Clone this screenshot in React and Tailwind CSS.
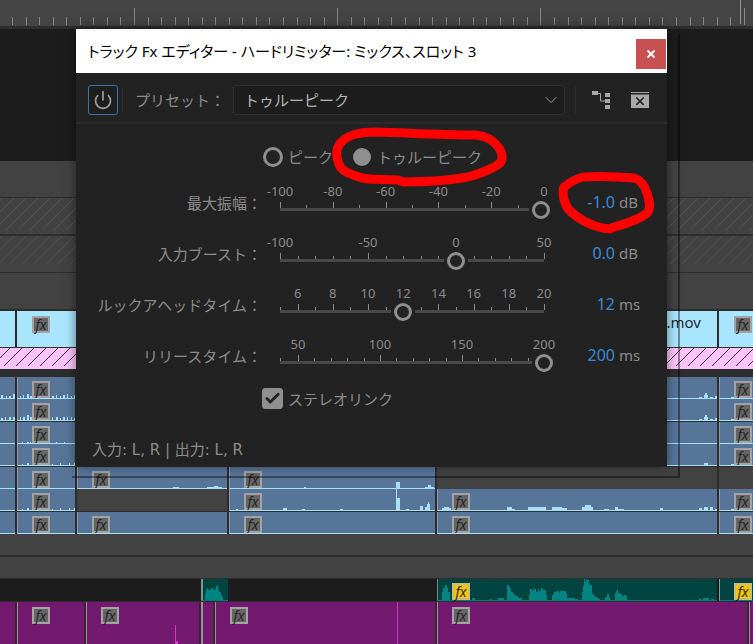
import React, { useState } from 'react'
import { ChevronDown, Power, Check } from 'lucide-react'

const range = (from, to, step) => {
  const out = []
  for (let n = from; n <= to; n += step) out.push(n)
  return out
}

// [x, width, height] of every bar, measured from the left edge of its clip
const waves = {
  edge: [[1, 2, 3], [6, 1, 2], [9, 2, 2], [13, 2, 4]],
  edgeTwo: [[1, 2, 2], [5, 1, 3], [9, 2, 3], [13, 2, 3]],
  voiceOne: [[2, 1, 2], [5, 1, 3], [9, 2, 4], [12, 2, 2], [34, 2, 2], [38, 1, 3], [42, 1, 2], [45, 2, 3], [49, 1, 4], [53, 1, 2], [56, 2, 3]],
  voiceTwo: [[2, 1, 3], [5, 2, 3], [9, 2, 5], [12, 2, 3], [34, 1, 3], [38, 2, 3], [42, 1, 2], [45, 2, 3], [49, 1, 3], [53, 1, 3], [56, 2, 2]],
  faint: [[4, 1, 1], [9, 2, 1], [12, 1, 1], [38, 1, 1], [46, 1, 1]],
  faintTwo: [[4, 1, 1], [9, 2, 2], [34, 1, 1], [42, 1, 2], [51, 1, 2], [56, 1, 2]],
  shortClip: [[95, 6, 1], [129, 4, 1], [133, 3, 1], [136, 4, 2], [140, 4, 1]],
  peakOne: [[74, 2, 1], [166, 4, 6], [167, 3, 4], [195, 9, 1], [198, 3, 3]],
  peakTwo: [[6, 2, 1], [53, 4, 2], [72, 3, 1], [110, 3, 1], [166, 1, 21], [167, 3, 12], [176, 3, 1], [190, 3, 4], [195, 5, 3], [197, 3, 6], [198, 1, 8]],
  mid: [[4, 9, 2], [6, 5, 3], [69, 5, 3], [74, 3, 1], [90, 18, 3], [114, 10, 3], [124, 5, 2], [144, 11, 3], [147, 6, 5], [166, 5, 1], [177, 3, 3], [180, 6, 1], [222, 3, 2], [261, 3, 2], [266, 4, 3], [272, 3, 3], [277, 3, 1]],
  right: [[261, 3, 1], [266, 4, 3], [267, 2, 5], [272, 3, 1], [277, 3, 2]],
  last: [[11, 3, 1]],
  musicShort: [[2, 1, 6], [3, 1, 10], [4, 1, 12], [5, 3, 10], [8, 2, 12], [10, 2, 10], [12, 1, 11], [13, 1, 14], [14, 1, 15], [15, 1, 11], [16, 2, 8], [18, 1, 5], [19, 1, 3]],
  music: [[4, 1, 8], [5, 2, 12], [7, 2, 15], [9, 1, 12], [10, 2, 8], [34, 3, 2], [52, 2, 1], [60, 6, 2], [69, 2, 15], [71, 1, 13], [72, 1, 11], [73, 2, 8], [75, 2, 6], [77, 3, 4], [80, 4, 2], [91, 1, 5], [92, 2, 11], [94, 1, 9], [95, 3, 11], [98, 2, 8], [100, 1, 11], [101, 2, 9], [103, 2, 12], [105, 3, 10], [107, 2, 5], [114, 2, 5], [116, 2, 8], [118, 3, 9], [121, 1, 7], [122, 6, 9], [128, 1, 7], [129, 8, 2], [137, 3, 1], [144, 1, 8], [145, 1, 14], [146, 1, 21], [147, 1, 18], [148, 1, 21], [149, 2, 20], [151, 3, 15], [154, 1, 7], [155, 2, 5], [157, 3, 3], [160, 2, 1], [167, 2, 3], [169, 2, 6], [171, 1, 3], [177, 1, 7], [178, 2, 9], [179, 1, 11], [180, 2, 7], [182, 2, 6], [184, 2, 4], [186, 2, 5], [188, 1, 3], [261, 3, 1], [265, 6, 2], [273, 3, 1]],
}

const clipGrid = 'grid grid-cols-[15px_58px_150px_206px_1fr_34px] gap-[2px]'

const Wave = ({ bars, color }) => (
  <svg className="absolute bottom-0 left-0 h-[21px] w-full" shapeRendering="crispEdges" aria-hidden="true">
    {bars.map(([x, w, h], i) => (
      <rect key={i} x={x} y={21 - h} width={w} height={h} fill={color} />
    ))}
  </svg>
)

const FxBadge = ({ active }) => (
  <span
    className={
      'relative flex h-[17px] w-[18px] items-center justify-center border-2 text-[#222] ' +
      (active ? 'border-[#c9bd7c] bg-[#f2c40c]' : 'border-[#a3a3a3] bg-[#666]')
    }
  >
    <i className="font-['Open_Sans',sans-serif] text-sm leading-[14px]">fx</i>
  </span>
)

const AudioClip = ({ bars, fx = true, first }) => (
  <div className={'relative flex h-[22px] items-end overflow-hidden border-b border-[#a8e0f8] bg-[#577599] ' + (first ? '' : 'border-l border-l-[#8f9ba8] pl-3.5')}>
    {bars && <Wave bars={bars} color="#a8e0f8" />}
    {fx && !first && <FxBadge />}
  </div>
)

const Empty = () => <div className="h-[22px] bg-[#424242]" />

const Hatch = ({ id, className, color, offset }) => (
  <svg className={'block w-full ' + className} aria-hidden="true">
    <pattern id={id} width="12" height="12" x={offset} patternUnits="userSpaceOnUse">
      <path d="M-1 13L13 -1M-1 1L1 -1M11 13L13 11" stroke={color} strokeWidth="1" />
    </pattern>
    <rect width="100%" height="100%" fill={'url(#' + id + ')'} />
  </svg>
)

const Ruler = () => (
  <svg className="block h-[26px] w-full bg-[#444]" shapeRendering="crispEdges" aria-hidden="true">
    {range(0, 140, 1).map((n) => {
      const x = Math.round(12 + n * 13.55)
      const major = n % 15 === 9
      return <rect key={n} x={x} y={major ? 8 : 17} width="1" height={major ? 17 : 8} fill="#878787" />
    })}
    <rect x="740" y="0" width="1" height="24" fill="#989898" />
  </svg>
)

const Timeline = () => (
  <div className="flex min-h-screen flex-col bg-[#2d2d2d]">
    <Ruler />
    <div className="mt-[3px] h-[132px] bg-[#1c1c1c]" />
    <div className="h-9 bg-[#424242]" />
    <div className="mt-px h-9 bg-[#424242]">
      <Hatch id="lockedOne" className="h-8" color="#555" offset={2} />
    </div>
    <div className="mt-[2px] h-9 bg-[#424242]">
      <Hatch id="lockedTwo" className="h-7" color="#525252" offset={2} />
    </div>
    <div className="mt-px h-9 bg-[#424242]" />

    <div className="mt-[2px] grid h-9 grid-cols-[15px_1fr_34px] gap-[2px]">
      <div className="bg-[#a9e5fc]" />
      <div className="flex items-start justify-between bg-[#a9e5fc] pl-[15px] pr-4 pt-[5px]">
        <FxBadge />
        <span className="-mt-1 text-[15px] leading-5 text-[#1c2a30]">.mov</span>
      </div>
      <div className="bg-[#a9e5fc] pl-[15px] pt-[5px]">
        <FxBadge />
      </div>
    </div>
    <div className="mt-px h-[21px] bg-[#fcc4fb]">
      <Hatch id="matte" className="h-[18px]" color="#3a283a" offset={-2} />
    </div>

    <div className="mt-2 flex flex-col gap-px">
      <div>
        <div className={clipGrid}>
          <AudioClip first bars={waves.edge} />
          <AudioClip bars={waves.voiceOne} />
          <AudioClip fx={false} />
          <AudioClip fx={false} />
          <AudioClip fx={false} bars={waves.right} />
          <AudioClip bars={waves.last} />
        </div>
        <div className={clipGrid}>
          <AudioClip first bars={waves.edgeTwo} />
          <AudioClip bars={waves.voiceTwo} />
          <AudioClip fx={false} />
          <AudioClip fx={false} />
          <AudioClip fx={false} bars={waves.right} />
          <AudioClip bars={waves.last} />
        </div>
      </div>
      <div>
        <div className={clipGrid}>
          <AudioClip first />
          <AudioClip bars={waves.faint} />
          <AudioClip fx={false} />
          <AudioClip fx={false} />
          <AudioClip fx={false} />
          <AudioClip />
        </div>
        <div className={clipGrid}>
          <AudioClip first />
          <AudioClip bars={waves.faintTwo} />
          <AudioClip fx={false} />
          <AudioClip fx={false} />
          <AudioClip fx={false} bars={[[266, 4, 2]]} />
          <AudioClip bars={waves.last} />
        </div>
      </div>
      <div>
        <div className={clipGrid}>
          <AudioClip first />
          <AudioClip />
          <AudioClip bars={waves.shortClip} />
          <AudioClip bars={waves.peakOne} />
          <Empty />
          <Empty />
        </div>
        <div className={clipGrid}>
          <AudioClip first />
          <AudioClip bars={waves.faintTwo} />
          <Empty />
          <AudioClip bars={waves.peakTwo} />
          <AudioClip bars={waves.mid} />
          <AudioClip bars={waves.last} />
        </div>
      </div>
      <div className={clipGrid}>
        <AudioClip first />
        <AudioClip />
        <AudioClip />
        <AudioClip />
        <AudioClip />
        <AudioClip />
      </div>
    </div>

    <div className="h-[21px] bg-[#424242]" />
    <div className="mt-[2px] h-[21px] bg-[#424242]" />

    <div className="mt-px grid h-[22px] grid-cols-[199px_27px_205px_1fr_34px] gap-x-[2px] bg-[#1c1c1c]">
      <div />
      <div className="relative border-b border-l-2 border-b-[#017a78] border-l-[#7b9695] bg-[#004441]">
        <Wave bars={waves.musicShort} color="#008583" />
      </div>
      <div />
      <div className="relative flex items-end border-b border-l border-b-[#017a78] border-l-[#6d8a89] bg-[#004441] pl-3.5">
        <Wave bars={waves.music} color="#008583" />
        <FxBadge active />
      </div>
      <div className="relative flex items-end border-b border-l border-b-[#017a78] border-l-[#8b9c9b] bg-[#004441] pl-3.5">
        <FxBadge active />
      </div>
    </div>

    <div className="mt-px grid min-h-[42px] flex-1 grid-cols-[15px_67px_113px_12px_220px_1fr_4px] gap-[2px]">
      <div className="bg-[#731a70]" />
      <div className="border-l border-[#a58aa4] bg-[#731a70] pl-3.5 pt-[5px]">
        <FxBadge />
      </div>
      <div className="flex items-start justify-between border-l border-[#a58aa4] bg-[#731a70] pl-3.5 pr-[21px] pt-[5px]">
        <FxBadge />
        <svg className="mt-[18px] h-5 w-[3px]" shapeRendering="crispEdges" aria-hidden="true">
          <path d="M0 0h1v16h2v4H0z" fill="#d435cd" />
        </svg>
      </div>
      <div className="border-l-2 border-[#a58aa4] bg-[#731a70]" />
      <div className="flex justify-between border-l border-[#a58aa4] bg-[#731a70] pl-3.5 pr-[37px]">
        <div className="pt-[5px]">
          <FxBadge />
        </div>
        <div className="w-px bg-[#c935c3]" />
      </div>
      <div className="border-l border-[#a58aa4] bg-[#731a70] pl-3.5 pt-[5px]">
        <FxBadge />
      </div>
      <div className="border-l border-[#a58aa4] bg-[#731a70]" />
    </div>
  </div>
)

const sliders = [
  { id: 'amplitude', label: '最大振幅：', min: -100, max: 0, value: -1, unit: 'dB', digits: 1, labels: range(-100, 0, 20), ticks: range(-100, 0, 10) },
  { id: 'boost', label: '入力ブースト：', min: -100, max: 50, value: 0, unit: 'dB', digits: 1, labels: range(-100, 50, 50), ticks: range(-100, 50, 10) },
  { id: 'lookahead', label: 'ルックアヘッドタイム：', min: 5, max: 20, value: 12, unit: 'ms', digits: 0, labels: range(6, 20, 2), ticks: range(5, 20, 1) },
  { id: 'release', label: 'リリースタイム：', min: 39, max: 200, value: 200, unit: 'ms', digits: 0, labels: range(50, 200, 50), ticks: [39].concat(range(50, 200, 10)) },
]

const SliderRow = ({ slider }) => {
  const { id, label, min, max, unit, digits, labels, ticks } = slider
  const [value, setValue] = useState(slider.value)
  const percent = (n) => ((n - min) / (max - min)) * 100 + '%'

  return (
    <div className="grid h-[51px] grid-cols-[187px_1fr_123px]">
      <label htmlFor={id} className="whitespace-nowrap pr-px pt-[13px] text-right text-[15px] leading-5">
        {label}
      </label>
      <div className="ml-[17px]">
        <div className="relative h-[22px]">
          {labels.map((n) => (
            <span key={n} className="absolute top-[2px] -translate-x-1/2 text-[13px] leading-[18px]" style={{ left: percent(n) }}>
              {n}
            </span>
          ))}
        </div>
        <svg className="block h-[6px] w-full overflow-visible" shapeRendering="crispEdges" aria-hidden="true">
          {ticks.map((n) => {
            const h = labels.includes(n) ? 6 : 3
            return <rect key={n} x={percent(n)} y={6 - h} width="1" height={h} fill="#8c8c8c" />
          })}
        </svg>
        <div className="h-[3px] bg-[#484848]">
          <input
            id={id}
            type="range"
            min={min}
            max={max}
            value={value}
            onChange={(e) => setValue(Number(e.target.value))}
            className="relative -ml-[9px] block h-[3px] w-[calc(100%+18px)] appearance-none bg-transparent outline-none [&::-webkit-slider-thumb]:size-[18px] [&::-webkit-slider-thumb]:appearance-none [&::-webkit-slider-thumb]:rounded-full [&::-webkit-slider-thumb]:border-[3px] [&::-webkit-slider-thumb]:border-[#8f8f8f] [&::-webkit-slider-thumb]:bg-[#222] [&::-webkit-slider-thumb]:shadow-[0_0_0_3px_#222]"
          />
        </div>
      </div>
      <div className="flex items-baseline gap-1 pt-[12px]">
        <output htmlFor={id} className="w-[71px] text-right text-base leading-5 text-[#3b8bd4]">
          {value.toFixed(digits)}
        </output>
        <span className="text-[15px] leading-5">{unit}</span>
      </div>
    </div>
  )
}

const RoutingIcon = () => (
  <svg width="19" height="18" viewBox="0 0 19 18" fill="#a8a8a8" aria-hidden="true">
    <path d="M0 0h6v4H0zM13 2h5v4h-5zM13 8h5v4h-5zM13 14h5v4h-5z" />
    <path d="M6 2.5h2.5V10H13" fill="none" stroke="#a8a8a8" />
  </svg>
)

const RemoveIcon = () => (
  <svg width="18" height="16" viewBox="0 0 18 16" aria-hidden="true">
    <path d="M0 0h18v1H0zM0 2.5h18V16H0z" fill="#a8a8a8" />
    <path d="M5.3 5.5l7.4 7.4M12.7 5.5l-7.4 7.4" stroke="#222" strokeWidth="1.6" />
  </svg>
)

const FxDialog = () => {
  const [mode, setMode] = useState('true')
  const [linked, setLinked] = useState(true)
  const radio =
    'size-5 appearance-none rounded-full border-[3px] border-[#8f8f8f] checked:border checked:border-transparent checked:bg-[#8f8f8f] checked:bg-clip-padding'

  return (
    <section className="absolute left-[76px] right-[86px] top-[29px] bg-[#222] text-[#8c8c8c] shadow-[0_0_10px_rgba(0,0,0,0.5)]">
      <header className="flex h-11 items-center justify-between bg-white pl-3 pr-px">
        <h1 className="whitespace-nowrap text-[15px] leading-6 text-black [font-feature-settings:'palt']">
          トラック Fx エディター - ハードリミッター: ミックス、スロット 3
        </h1>
        <button type="button" aria-label="閉じる" className="mt-1.5 flex size-[30px] items-center justify-center bg-[#c75050]">
          <svg width="10" height="8" viewBox="0 0 10 8" aria-hidden="true">
            <path d="M1.5 0.5l7 7M8.5 0.5l-7 7" stroke="#fff" strokeWidth="2" />
          </svg>
        </button>
      </header>

      <div className="flex h-[51px] items-center border-b-2 border-[#2c2c2c] px-3 pt-1">
        <button type="button" aria-label="電源" className="flex size-[30px] items-center justify-center rounded-[3px] border border-[#3d73ad] bg-[#1e1e1e]">
          <Power size={20} strokeWidth={2} className="text-[#a0a0a0]" />
        </button>
        <span className="ml-1 h-[26px] w-px bg-[#303030]" />
        <label htmlFor="preset" className="ml-3 whitespace-nowrap text-[15px] leading-5">
          プリセット：
        </label>
        <div className="relative ml-2 flex-1">
          <select
            id="preset"
            defaultValue="true-peak"
            className="block h-[30px] w-full appearance-none rounded-[3px] border border-[#303030] bg-[#1d1d1d] px-[10px] text-[15px] leading-5 text-[#b4b4b4]"
          >
            <option value="true-peak">トゥルーピーク</option>
          </select>
          <ChevronDown size={20} strokeWidth={1} className="pointer-events-none absolute right-1 top-[5px] text-[#b4b4b4]" />
        </div>
        <span className="ml-[10px] h-[26px] w-px bg-[#303030]" />
        <button type="button" aria-label="ルーティング" className="ml-4">
          <RoutingIcon />
        </button>
        <button type="button" aria-label="エフェクトを削除" className="ml-5 mr-[6px]">
          <RemoveIcon />
        </button>
      </div>

      <div className="pb-[6px] pt-[23px]">
        <div className="flex pl-[187px] text-[15px] leading-5">
          <label className="flex items-center gap-[5px] whitespace-nowrap">
            <input type="radio" name="mode" className={radio} checked={mode === 'peak'} onChange={() => setMode('peak')} />
            ピーク
          </label>
          <label className="ml-[19px] flex items-center gap-[5px] whitespace-nowrap">
            <input type="radio" name="mode" className={radio} checked={mode === 'true'} onChange={() => setMode('true')} />
            トゥルーピーク
          </label>
        </div>

        <div className="mt-[13px]">
          {sliders.map((slider) => (
            <SliderRow key={slider.id} slider={slider} />
          ))}
        </div>

        <label className="ml-[186px] mt-1 flex w-fit items-center gap-[5px] text-[15px] leading-5">
          <span className="relative size-[21px]">
            <input
              type="checkbox"
              className="block size-[21px] appearance-none rounded-[3px] border border-[#8f8f8f] checked:bg-[#8f8f8f]"
              checked={linked}
              onChange={() => setLinked(!linked)}
            />
            {linked && <Check size={17} strokeWidth={4} className="pointer-events-none absolute left-[2px] top-[2px] text-[#222]" />}
          </span>
          ステレオリンク
        </label>

        <p className="ml-4 mt-[31px] font-['DejaVu_Sans','Noto_Sans_CJK_JP',sans-serif] text-[15px] leading-5">入力: L, R | 出力: L, R</p>
      </div>
    </section>
  )
}

const Marker = () => (
  <svg className="pointer-events-none absolute left-0 top-0 h-[250px] w-[753px]" fill="none" stroke="#f00" strokeWidth="9" strokeLinecap="round" strokeLinejoin="round" aria-hidden="true">
    <path d="M403 182L398 180C384 179 372 180 362 178C352 175 344 172 341 168C336 160 336 151 338 147C342 138 354 132 376 132C410 133 440 135 476 135C488 136 494 141 499 148C503 154 503 160 500 163C494 168 480 174 468 177C446 181 425 182 403 182L412 182" />
    <path d="M610 229L602 228C590 225 577 218 569 210C563 202 562 192 564 187C569 183 575 179 583 177C598 176 612 176 634 178C642 180 645 187 647 193C650 203 651 209 647 213C640 219 625 224 614 227Z" />
  </svg>
)

export default function App() {
  return (
    <main className="relative overflow-hidden font-['Noto_Sans','Noto_Sans_CJK_JP',sans-serif]">
      <Timeline />
      <div className="absolute left-[72px] right-[73px] top-[34px] h-[444px] border-b-2 border-r-2 border-black/40" />
      <FxDialog />
      <Marker />
    </main>
  )
}
